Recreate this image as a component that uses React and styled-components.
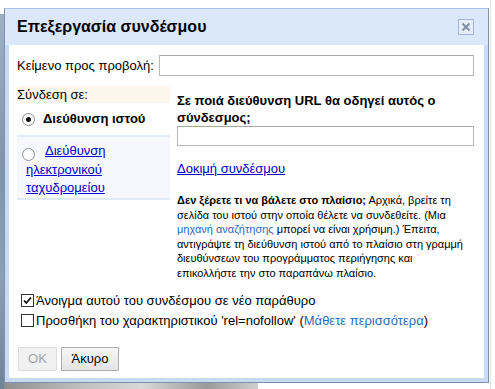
import React from "react";
import styled, { createGlobalStyle } from "styled-components";

const Global = createGlobalStyle`
  html, body { margin: 0; padding: 0; background: #fff; }
  body { font-family: "Liberation Sans", Arial, sans-serif; }
  * { box-sizing: border-box; }
`;

const Page = styled.div`
  width: 495px;
  height: 389px;
  padding: 8px 0 0 4px;
  overflow: hidden;
  background:
    linear-gradient(180deg, #9fb0c4, #7f95ad 40%, #8aa0b4 70%, #6f8499) 0 14px / 4px 375px no-repeat,
    linear-gradient(90deg, #8c8c8c, #bdbdbd 30%, #d8d8d8 55%, #9a9a9a 80%, #cfcfcf) 0 383px / 258px 6px no-repeat,
    linear-gradient(#e2e2e2, #e2e2e2) 490px 0 / 1px 389px no-repeat,
    #ffffff;
`;

const Dialog = styled.div`
  width: 485px;
  height: 375px;
  border: 1px solid #7d90b0;
  border-top-color: #a9bfe6;
  background: #c7daf8;
  display: flex;
  flex-direction: column;
`;

const TitleBar = styled.div`
  height: 36px;
  flex: none;
  display: flex;
  align-items: center;
  justify-content: space-between;
  padding: 0 14px 0 12px;
  background: #dbe7fb;
`;

const Title = styled.div`
  font-size: 16px;
  font-weight: bold;
  color: #000;
`;

const CloseBox = styled.div`
  width: 16px;
  height: 16px;
  border: 1px solid #a3b5d6;
  background: #e6eefc;
  display: flex;
  align-items: center;
  justify-content: center;
`;

const Body = styled.div`
  flex: 1;
  margin: 0 4px 4px;
  background: #fff;
  padding: 10px 10px 0 8px;
  font-size: 13px;
  color: #000;
`;

const TextRow = styled.div`
  display: flex;
  align-items: center;
  gap: 5px;
`;

const Label = styled.span`
  white-space: nowrap;
`;

const TextInput = styled.input`
  flex: ${(p) => (p.$fill ? 1 : "none")};
  width: ${(p) => (p.$fill ? "auto" : "100%")};
  height: ${(p) => p.$h || 21}px;
  border: 1px solid #b9b9b9;
  border-top-color: #a8a8a8;
  background: #fff;
  padding: 0 3px;
  font: 13px "Liberation Sans", Arial, sans-serif;
  outline: none;
  display: block;
`;

const LinkSection = styled.div`
  display: flex;
  margin-top: 10px;
`;

const Tabs = styled.div`
  width: 153px;
  flex: none;
  display: flex;
  flex-direction: column;
`;

const TabsHeader = styled.div`
  height: 17px;
  line-height: 17px;
  background: #fdf6ec;
`;

const Tab = styled.div`
  display: flex;
  align-items: ${(p) => (p.$selected ? "center" : "flex-start")};
  height: ${(p) => p.$h}px;
  padding: ${(p) => (p.$selected ? "0 0 0 5px" : "5px 4px 0 9px")};
  background: ${(p) => (p.$selected ? "#fff" : "#f6f8fd")};
  border-bottom: 2px solid #e3eaf7;
  font-weight: ${(p) => (p.$selected ? "bold" : "normal")};
  line-height: 17.5px;
`;

const TabText = styled.div`
  flex: 1;
`;

const Radio = styled.span`
  width: 13px;
  height: 13px;
  flex: none;
  border-radius: 50%;
  border: 1px solid #8f8f8f;
  background: radial-gradient(circle, #fff 0, #fff 60%, #e8e8e8 100%);
  display: inline-flex;
  align-items: center;
  justify-content: center;
  vertical-align: -2px;
  margin-left: ${(p) => p.$left || 0}px;
  margin-right: ${(p) => p.$gap}px;
  &::after {
    content: "";
    width: 5px;
    height: 5px;
    border-radius: 50%;
    background: ${(p) => (p.$on ? "#111" : "transparent")};
  }
`;

const BlueLink = styled.a`
  color: #0000cc;
  text-decoration: underline;
  cursor: pointer;
`;

const SoftLink = styled.a`
  color: #2a6bbf;
  text-decoration: none;
  cursor: pointer;
`;

const Panel = styled.div`
  flex: 1;
  padding: 6px 0 0 7px;
`;

const Question = styled.div`
  font-weight: bold;
  line-height: 17px;
`;

const TestLink = styled.div`
  margin-top: 15px;
  line-height: 16px;
`;

const Help = styled.div`
  margin-top: 16px;
  font-size: 11px;
  line-height: 14.6px;
  white-space: nowrap;
`;

const Checks = styled.div`
  margin-top: 10px;
  display: flex;
  flex-direction: column;
`;

const CheckRow = styled.label`
  display: flex;
  align-items: center;
  height: 20px;
  padding-left: 4px;
`;

const Box = styled.span`
  width: 13px;
  height: 13px;
  flex: none;
  border: 1px solid #333;
  background: #fff;
  margin-right: 2px;
  display: inline-flex;
  align-items: center;
  justify-content: center;
`;

const Buttons = styled.div`
  display: flex;
  gap: 4px;
  margin-top: 16px;
  padding-left: 1px;
`;

const Button = styled.button`
  height: 24px;
  width: ${(p) => p.$w}px;
  font: 13px "Liberation Sans", Arial, sans-serif;
  color: ${(p) => (p.$disabled ? "#a3a3a3" : "#000")};
  background: ${(p) =>
    p.$disabled ? "#f1f1f1" : "linear-gradient(#f6f6f6, #e4e4e4)"};
  border: 1px solid ${(p) => (p.$disabled ? "#dcdcdc" : "#acacac")};
  border-radius: 1px;
  padding: 0;
`;

const Check = () => (
  <svg width="11" height="11" viewBox="0 0 11 11">
    <path d="M2 5.5 L4.3 8 L9 2.5" stroke="#111" strokeWidth="1.8" fill="none" />
  </svg>
);

export default function App() {
  return (
    <Page>
      <Global />
      <Dialog>
        <TitleBar>
          <Title>Επεξεργασία συνδέσμου</Title>
          <CloseBox>
            <svg width="10" height="10" viewBox="0 0 10 10">
              <path d="M1.5 1.5 L8.5 8.5 M8.5 1.5 L1.5 8.5" stroke="#7f8ea8" strokeWidth="2" />
            </svg>
          </CloseBox>
        </TitleBar>
        <Body>
          <TextRow>
            <Label>Κείμενο προς προβολή:</Label>
            <TextInput $fill />
          </TextRow>
          <LinkSection>
            <Tabs>
              <TabsHeader>Σύνδεση σε:</TabsHeader>
              <Tab $selected $h={34}>
                <Radio $on $gap={8} />
                Διεύθυνση ιστού
              </Tab>
              <Tab $h={63}>
                <TabText>
                  <Radio $left={-4} $gap={10} />
                  <BlueLink>Διεύθυνση ηλεκτρονικού ταχυδρομείου</BlueLink>
                </TabText>
              </Tab>
            </Tabs>
            <Panel>
              <Question>
                Σε ποιά διεύθυνση URL θα οδηγεί αυτός ο
                <br />
                σύνδεσμος;
              </Question>
              <TextInput $h={20} />
              <TestLink>
                <BlueLink>Δοκιμή συνδέσμου</BlueLink>
              </TestLink>
              <Help>
                <b>Δεν ξέρετε τι να βάλετε στο πλαίσιο;</b> Αρχικά, βρείτε τη
                <br />
                σελίδα του ιστού στην οποία θέλετε να συνδεθείτε. (Μια
                <br />
                <SoftLink>μηχανή αναζήτησης</SoftLink> μπορεί να είναι χρήσιμη.) Έπειτα,
                <br />
                αντιγράψτε τη διεύθυνση ιστού από το πλαίσιο στη γραμμή
                <br />
                διευθύνσεων του προγράμματος περιήγησης και
                <br />
                επικολλήστε την στο παραπάνω πλαίσιο.
              </Help>
            </Panel>
          </LinkSection>
          <Checks>
            <CheckRow>
              <Box>
                <Check />
              </Box>
              Άνοιγμα αυτού του συνδέσμου σε νέο παράθυρο
            </CheckRow>
            <CheckRow>
              <Box />
              Προσθήκη του χαρακτηριστικού 'rel=nofollow' (
              <SoftLink>Μάθετε περισσότερα</SoftLink>)
            </CheckRow>
          </Checks>
          <Buttons>
            <Button $w={39} $disabled>
              OK
            </Button>
            <Button $w={58}>Άκυρο</Button>
          </Buttons>
        </Body>
      </Dialog>
    </Page>
  );
}
